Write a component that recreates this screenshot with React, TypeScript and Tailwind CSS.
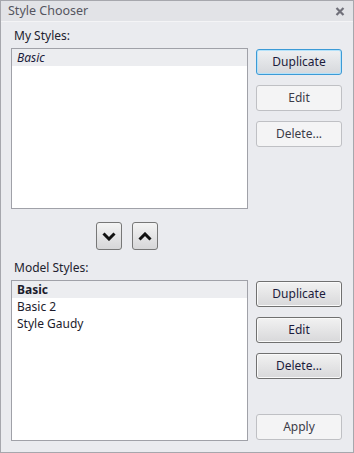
import React from "react";

type BtnKind = "normal" | "focused" | "disabled";

function Btn({ label, kind }: { label: string; kind: BtnKind }) {
  const base =
    "h-[26px] w-[86px] rounded-[3px] border text-[12px] leading-none flex items-center justify-center";
  if (kind === "disabled") {
    return (
      <div className={`${base} border-[#bfc0c4] bg-[#f4f4f5] text-[#3c3c48]`}>{label}</div>
    );
  }
  if (kind === "focused") {
    return (
      <div
        className={`${base} border-[#3c9ad6] bg-gradient-to-b from-[#eef0f2] to-[#d6d8dc] text-[#1c1c3c] shadow-[inset_0_0_0_1px_#b4e2fa]`}
      >
        {label}
      </div>
    );
  }
  return (
    <div
      className={`${base} border-[#707070] bg-gradient-to-b from-[#f2f2f2] to-[#d8d8da] text-[#1c1c3c] shadow-[inset_0_0_0_1px_#fafafa]`}
    >
      {label}
    </div>
  );
}

function Chevron({ up }: { up?: boolean }) {
  return (
    <div className="h-[28px] w-[26px] rounded-[3px] border border-[#777] bg-gradient-to-b from-[#f4f4f4] to-[#d6d6d8] flex items-center justify-center">
      <svg width="14" height="9" viewBox="0 0 14 9">
        <polyline
          points={up ? "1.5,7.5 7,2 12.5,7.5" : "1.5,1.5 7,7 12.5,1.5"}
          fill="none"
          stroke="#111"
          strokeWidth="3"
        />
      </svg>
    </div>
  );
}

export default function App() {
  return (
    <div
      className="w-[354px] h-[453px] border border-[#a6a7ad] bg-[#eaebef] flex flex-col text-[#22222e]"
      style={{ fontFamily: '"Noto Sans", "Open Sans", sans-serif' }}
    >
      <div className="h-[21px] bg-[#e2e3e7] border-b border-[#f4f4f6] flex items-center justify-between pl-[7px] pr-[8px]">
        <span className="text-[12.5px] text-[#555560]">Style Chooser</span>
        <svg width="10" height="9" viewBox="0 0 10 9">
          <path d="M1.5 1 L8.5 8 M8.5 1 L1.5 8" stroke="#70707a" strokeWidth="2.2" />
        </svg>
      </div>

      <div className="flex flex-col pl-[10px]">
        <div className="mt-[6px] h-[16px] pl-[3px] text-[12px] leading-[16px]">My Styles:</div>
        <div className="mt-[4px] flex">
          <div className="w-[237px] h-[161px] border border-[#a0a1a8] bg-white">
            <div className="h-[17px] bg-[#ecedf0] pl-[5px] text-[12px] leading-[17px] italic text-[#1c1c3c]">
              Basic
            </div>
          </div>
          <div className="ml-[8px] mt-[1px] flex flex-col gap-[10px]">
            <Btn label="Duplicate" kind="focused" />
            <Btn label="Edit" kind="disabled" />
            <Btn label="Delete..." kind="disabled" />
          </div>
        </div>

        <div className="mt-[13px] pl-[85px] flex gap-[10px]">
          <Chevron />
          <Chevron up />
        </div>

        <div className="mt-[10px] h-[16px] pl-[3px] text-[12px] leading-[16px]">Model Styles:</div>
        <div className="mt-[4px] flex">
          <div className="w-[237px] h-[161px] border border-[#a0a1a8] bg-white text-[12px] text-[#1c1c2c]">
            <div className="h-[17px] bg-[#ecedf0] pl-[5px] leading-[17px] font-bold">Basic</div>
            <div className="h-[17px] pl-[5px] leading-[17px]">Basic 2</div>
            <div className="h-[17px] pl-[5px] leading-[17px]">Style Gaudy</div>
          </div>
          <div className="ml-[8px] mt-[1px] flex flex-col">
            <div className="flex flex-col gap-[10px]">
              <Btn label="Duplicate" kind="normal" />
              <Btn label="Edit" kind="normal" />
              <Btn label="Delete..." kind="normal" />
            </div>
            <div className="mt-[35px]">
              <Btn label="Apply" kind="disabled" />
            </div>
          </div>
        </div>
      </div>
    </div>
  );
}
